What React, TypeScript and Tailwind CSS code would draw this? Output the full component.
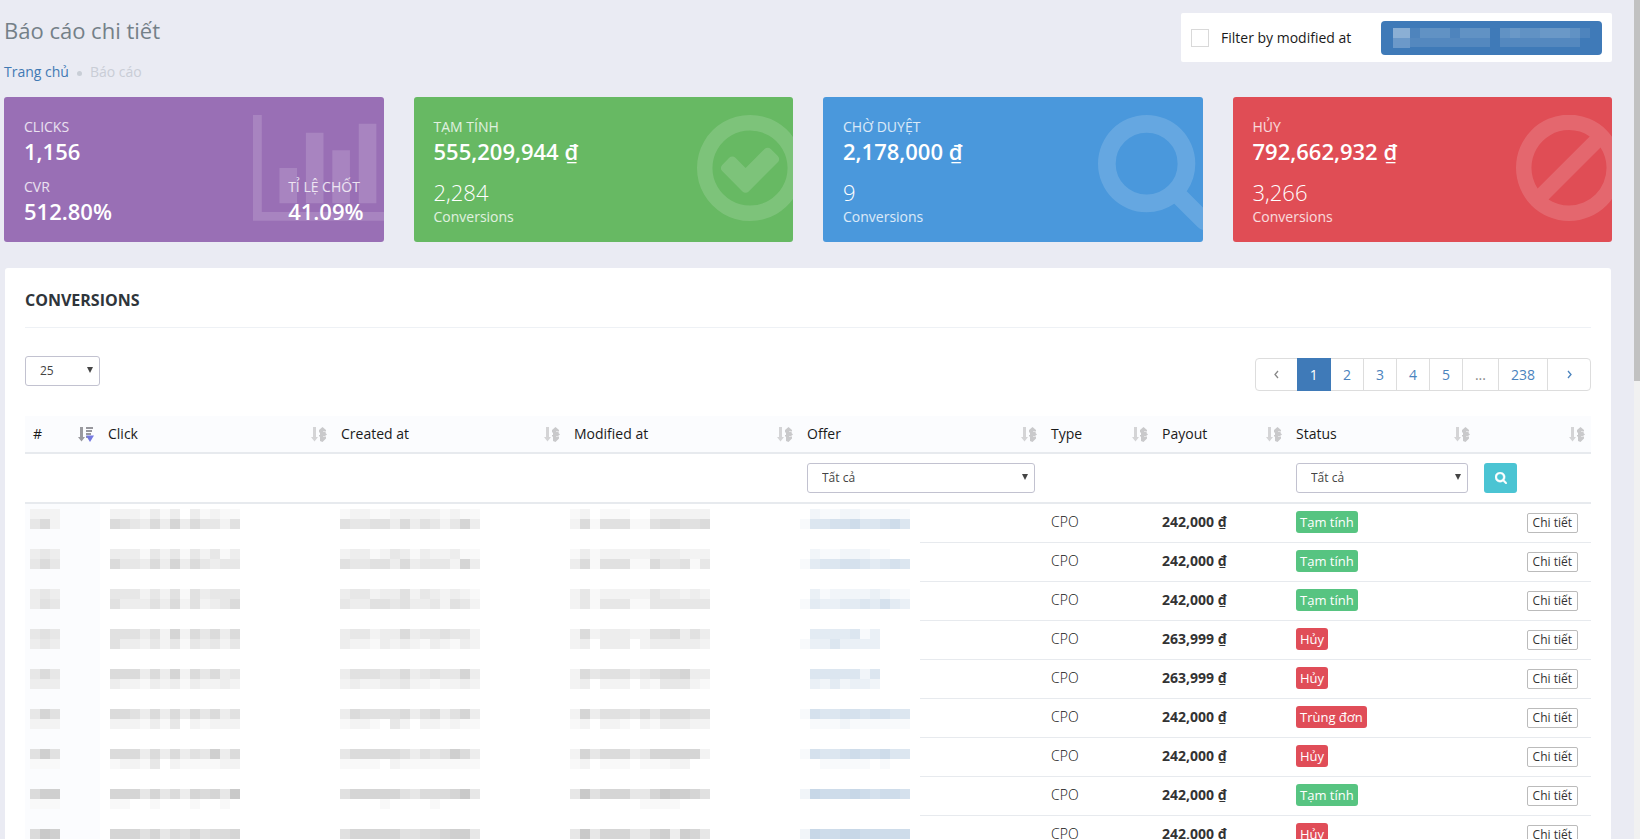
import { ReactNode } from "react";

type Status = "Tạm tính" | "Hủy" | "Trùng đơn";

interface Conversion {
  payout: string;
  status: Status;
  // masked cells, "top/bottom" line of shade levels
  id: string;
  click: string;
  created: string;
  modified: string;
  offer: string;
}

const conversions: Conversion[] = [
  { payout: "242,000", status: "Tạm tính", id: "222/462", click: "2221313031211/6543637364425", created: "12211222221211/54455363542473", modified: "12011100222222/26155511566556", offer: "02112211111/15566755675" },
  { payout: "242,000", status: "Tạm tính", id: "343/464", click: "3331424142413/6443637364344", created: "23312431322311/54455363444273", modified: "13122222333222/36155511644514", offer: "02112221100/14556654565" },
  { payout: "242,000", status: "Tạm tính", id: "343/354", click: "4442425153444/5333536252346", created: "34423352432321/43355453342542", modified: "24122222433232/24144411444444", offer: "03122223211/14334454643" },
  { payout: "263,999", status: "Hủy", id: "454/343", click: "5553527264636/5332424143424", created: "34423363445442/32213232132132", modified: "26233322556353/23033302333332", offer: "04444513/13353333" },
  { payout: "263,999", status: "Hủy", id: "464/333", click: "6663637264634/3221323132232", created: "35554463454473/23223342212232", modified: "26455534566733/23022202144421", offer: "05555525/03242332" },
  { payout: "242,000", status: "Trùng đơn", id: "475/222", click: "6653636364635/2221314021222", created: "36555563563573/12210420221211", modified: "27355546466655/12022102133322", offer: "16556656655/01112111111" },
  { payout: "242,000", status: "Hủy", id: "585/111", click: "6663636354836/1221402111122", created: "46666653545863/11110211111111", modified: "27466634777772/12011101112200", offer: "16556766755/00111110100" },
  { payout: "242,000", status: "Tạm tính", id: "688/111", click: "7774746376749/1100100010010", created: "57777754666794/00001000010000", modified: "49577744798875/00000001111000", offer: "28777876776/00000000000" },
  { payout: "242,000", status: "Hủy", id: "698/222", click: "7775746575667/2221212112222", created: "57777755667884/11121121122211", modified: "49477744783874/22122201122211", offer: "28778877777/01111111110" },
];

const ICONS = {
  chart: {
    viewBox: "0 128 2048 1536",
    className: "w-[141px]",
    d: "M640 896v512h-256v-512h256zm384-512v1024h-256v-1024h256zm1024 1152v128h-2048v-1536h128v1408h1920zm-640-896v768h-256v-768h256zm384-384v1152h-256v-1152h256z",
  },
  check: {
    viewBox: "128 128 1536 1536",
    className: "w-[106px]",
    d: "M1299 813l-422 422q-19 19-45 19t-45-19l-294-294q-19-19-19-45t19-45l102-102q19-19 45-19t45 19l147 147 275-275q19-19 45-19t45 19l102 102q19 19 19 45t-19 45zm141 83q0-148-73-273t-198-198-273-73-273 73-198 198-73 273 73 273 198 198 273 73 273-73 198-198 73-273zm224 0q0 209-103 385.5t-279.5 279.5-385.5 103-385.5-103-279.5-279.5-103-385.5 103-385.5 279.5-279.5 385.5-103 385.5 103 279.5 279.5 103 385.5z",
  },
  search: {
    viewBox: "64 128 1664 1664",
    className: "w-[115px]",
    d: "M1216 832q0-185-131.5-316.5t-316.5-131.5-316.5 131.5-131.5 316.5 131.5 316.5 316.5 131.5 316.5-131.5 131.5-316.5zm512 832q0 52-38 90t-90 38q-54 0-90-38l-343-342q-179 124-399 124-143 0-273.5-55.5t-225-150-150-225-55.5-273.5 55.5-273.5 150-225 225-150 273.5-55.5 273.5 55.5 225 150 150 225 55.5 273.5q0 220-124 399l343 343q37 37 37 90z",
  },
  ban: {
    viewBox: "128 128 1536 1536",
    className: "w-[106px]",
    d: "M1440 893q0-161-87-295l-754 753q137 89 297 89 111 0 211.5-43.5t173.5-116.5 116-174.5 43-212.5zm-999 299l755-754q-135-91-300-91-148 0-273 73t-198 199-73 274q0 162 89 299zm1223-299q0 157-61 300t-163.5 246-245 164-298.5 61-298.5-61-245-164-163.5-246-61-300 61-299.5 163.5-245.5 245-164 298.5-61 298.5 61 245 164 163.5 245.5 61 299.5z",
  },
};

function StatCard({ color, icon, children }: { color: string; icon: keyof typeof ICONS; children: ReactNode }) {
  const { viewBox, className, d } = ICONS[icon];
  return (
    <div className={`relative overflow-hidden rounded-[3px] px-5 pt-5 pb-[13px] text-white ${color}`}>
      <svg viewBox={viewBox} className={`absolute top-[18px] -right-[10px] fill-white/15 ${className}`}>
        <path d={d} />
      </svg>
      <div className="relative">{children}</div>
    </div>
  );
}

function Figure({ label, value }: { label: string; value: string }) {
  return (
    <div>
      <div className="text-sm leading-5 text-white/80">{label}</div>
      <div className="text-[22px] leading-7 font-semibold">{value}</div>
    </div>
  );
}

function ConversionCard({ color, icon, label, value, count }: { color: string; icon: keyof typeof ICONS; label: string; value: string; count: string }) {
  return (
    <StatCard color={color} icon={icon}>
      <Figure label={label} value={value} />
      <div className="mt-3 text-[22px] leading-[30px] font-light">{count}</div>
      <div className="text-sm leading-5 text-white/80">Conversions</div>
    </StatCard>
  );
}

// Masked cell text: two lines of 10px blocks, one shade level per digit
function Mask({ data, top, blue = false }: { data: string; top: number; blue?: boolean }) {
  const lines = data.split("/");
  const width = lines[0].length * 10;
  return (
    <svg width={width} height="38" className="block" aria-hidden="true">
      {lines.map((line, y) =>
        line.split("").map((ch, x) => {
          const n = Number(ch);
          const fill = blue
            ? `rgb(${255 - n * 7},${255 - n * 5},${255 - n * 3})`
            : `rgb(${255 - n * 6},${255 - n * 6},${255 - n * 6})`;
          return <rect key={`${x}-${y}`} x={x * 10} y={top + y * 10} width="10" height="10" fill={fill} />;
        })
      )}
    </svg>
  );
}

function SortIcon({ active = false }: { active?: boolean }) {
  return (
    <svg width="16" height="15" viewBox="0 0 16 15" className="shrink-0" aria-hidden="true">
      <path d="M2 0h3v10h2l-3.500 4.500L0 10h2z" fill={active ? "#9a9a9f" : "#d4d4d6"} />
      {active ? (
        <>
          <path d="M8 0h7v2H8zM8 3h6v2H8zM8 6h5v2H8zM8 9h3v2H8z" fill="#97979d" />
          <path d="M8 8.500h8L12 15z" fill="#7478e0" />
        </>
      ) : (
        <>
          <path d="M11.500 0l3.500 3v2.500h-1l2 2-2 1.500h1v2.500L11.500 15 9 14V9.500H8v-1.500h1V5.500H8V3z" fill="#c9c9cb" />
          <path d="M12 4h3v1h-3zM12 9h3v1h-3z" fill="#e4e4e6" />
        </>
      )}
    </svg>
  );
}

function Select({ label, options, className = "" }: { label: string; options: string[]; className?: string }) {
  return (
    <div className={`relative ${className}`}>
      <select aria-label={label} className="h-[30px] w-full appearance-none rounded-[3px] border border-[#c2c2d0] bg-white pl-[14px] text-xs text-[#444]">
        {options.map((o) => (
          <option key={o}>{o}</option>
        ))}
      </select>
      <svg width="6" height="6" viewBox="0 0 6 6" className="pointer-events-none absolute top-[11px] right-[7px]">
        <path d="M0 0h6L3 6z" fill="#444" />
      </svg>
    </div>
  );
}

function Chevron({ d }: { d: string }) {
  return (
    <svg width="5" height="9" viewBox="0 0 5 9" fill="none" stroke="currentColor" strokeWidth="1.300">
      <path d={d} />
    </svg>
  );
}

const columns = [
  { name: "#", width: "w-[75px]" },
  { name: "Click", width: "w-[233px]" },
  { name: "Created at", width: "w-[233px]" },
  { name: "Modified at", width: "w-[233px]" },
  { name: "Offer", width: "w-[244px]" },
  { name: "Type", width: "w-[111px]" },
  { name: "Payout", width: "w-[134px]" },
  { name: "Status", width: "w-[188px]" },
  { name: "", width: "w-[115px]" },
];

const pages = ["1", "2", "3", "4", "5", "...", "238"];

function Pagination() {
  return (
    <nav aria-label="Pages" className="mt-[2px] flex h-[33px] text-sm text-[#4b83bd]">
      <a href="#" aria-label="Previous" className="flex w-[43px] items-center justify-center rounded-l-[4px] border border-[#ddd] text-[#888]">
        <Chevron d="M4 1L1 4.500 4 8" />
      </a>
      {pages.map((p) => (
        <a
          key={p}
          href="#"
          className={`-ml-px flex items-center border px-3 ${
            p === "1" ? "z-10 border-[#3f7ab8] bg-[#3f7ab8] text-white" : p === "..." ? "border-[#ddd] text-[#888]" : "border-[#ddd]"
          }`}
        >
          {p}
        </a>
      ))}
      <a href="#" aria-label="Next" className="-ml-px flex w-11 items-center justify-center rounded-r-[4px] border border-[#ddd]">
        <Chevron d="M1 1l3 3.500L1 8" />
      </a>
    </nav>
  );
}

function ConversionTable() {
  return (
    <table className="mt-[25px] w-full table-fixed border-separate border-spacing-0 text-sm leading-5 text-[#333]">
      <thead>
        <tr className="h-[38px] bg-[#fbfcfe]">
          {columns.map((c, i) => (
            <th key={i} className={`border-b-2 border-[#e7eaee] pr-[6px] pl-2 text-left font-normal text-[#1a1a1a] ${c.width}`}>
              <div className="flex items-center justify-between">
                <span>{c.name}</span>
                <SortIcon active={i === 0} />
              </div>
            </th>
          ))}
        </tr>
        <tr className="h-[50px]">
          {columns.map((c, i) => (
            <td key={i} className="border-b-2 border-[#e7eaee] px-2">
              {c.name === "Offer" && <Select label="Offer" options={["Tất cả"]} />}
              {c.name === "Status" && <Select label="Status" options={["Tất cả"]} />}
              {c.name === "" && (
                <button aria-label="Search" className="flex h-[30px] w-[33px] items-center justify-center rounded-[3px] bg-[#4bc4d3]">
                  <svg viewBox="64 128 1664 1664" className="w-3 fill-white stroke-white stroke-[60]">
                    <path d={ICONS.search.d} />
                  </svg>
                </button>
              )}
            </td>
          ))}
        </tr>
      </thead>
      <tbody>
        {conversions.map((c, i) => (
          <tr key={i} className="h-[39px] align-top">
            <td className="bg-[#fbfcfe] p-0 pl-[5px]">
              <Mask data={c.id} top={5 + i} />
            </td>
            <td className="p-0 pl-[10px]">
              <Mask data={c.click} top={5 + i} />
            </td>
            <td className="p-0 pl-[7px]">
              <Mask data={c.created} top={5 + i} />
            </td>
            <td className="p-0 pl-1">
              <Mask data={c.modified} top={5 + i} />
            </td>
            <td className="p-0">
              <div className="flex h-[39px] pl-px">
                <div className="w-[120px]">
                  <Mask data={c.offer} top={5 + i} blue />
                </div>
                <div className="flex-1 border-b border-[#e7eaee]" />
              </div>
            </td>
            <td className="border-b border-[#e7eaee] px-2 pt-2 font-light text-[#111]">CPO</td>
            <td className="border-b border-[#e7eaee] px-2 pt-2 font-bold">{c.payout} ₫</td>
            <td className="border-b border-[#e7eaee] px-2 pt-[7px]">
              <span
                className={`block w-fit rounded-[3px] px-1 text-[13px] leading-[22px] text-white ${
                  c.status === "Tạm tính" ? "bg-[#57c481]" : "bg-[#e04d58]"
                }`}
              >
                {c.status}
              </span>
            </td>
            <td className="border-b border-[#e7eaee] pt-[9px] pr-[13px]">
              <button className="ml-auto block rounded-[2px] border border-[#bbb] bg-white px-[5px] text-xs leading-[18px]">Chi tiết</button>
            </td>
          </tr>
        ))}
      </tbody>
    </table>
  );
}

export default function App() {
  return (
    <div className="flex h-screen overflow-hidden bg-[#eaebf3] font-['Open_Sans',sans-serif]">
      <main className="min-w-0 flex-1 pr-[22px] pl-1">
        {/* Header */}
        <header className="flex items-start justify-between">
          <div>
            <h1 className="mt-[14px] text-[22px] leading-8 text-[#748088]">Báo cáo chi tiết</h1>
            <nav className="mt-4 flex items-center text-sm leading-5">
              <a href="#" className="text-[#4179b3]">Trang chủ</a>
              <span className="mx-2 mt-[3px] h-[5px] w-[5px] rounded-full bg-[#c9ced6]" />
              <span className="text-[#c9cdd6]">Báo cáo</span>
            </nav>
          </div>
          <div className="mt-[13px] flex h-[49px] items-center rounded-[2px] bg-white px-[10px]">
            <input id="by-modified" type="checkbox" className="h-[18px] w-[18px] appearance-none border border-[#d9d9d9] bg-white" />
            <label htmlFor="by-modified" className="ml-3 w-[136px] text-sm text-[#1a1a1a]">Filter by modified at</label>
            <button aria-label="Date range" className="ml-6 flex h-[34px] w-[221px] items-center justify-center rounded-[4px] bg-[#3f7ab8]">
              <svg width="197" height="20" aria-hidden="true" fill="#fff">
                <path d="M0 0h17v10H0z" opacity=".4" />
                <path d="M0 10h17v10H0z" opacity=".24" />
                <path d="M27 0h30v10H27zM67 0h30v10H67zM107 0h80v10h-80z" opacity=".18" />
                <path d="M17 0h10v10H17zM57 0h10v10H57zM187 0h10v10h-10z" opacity=".08" />
                <path d="M17 10h80v9H17zM107 10h80v9h-80z" opacity=".11" />
                <path d="M117 0h10v10h-10zM147 0h30v10h-30z" opacity=".06" />
              </svg>
            </button>
          </div>
        </header>

        {/* Stats */}
        <section className="mt-[15px] grid grid-cols-4 gap-[30px]">
          <StatCard color="bg-[#996fb5]" icon="chart">
            <Figure label="CLICKS" value="1,156" />
            <div className="mt-3 flex justify-between pb-1">
              <Figure label="CVR" value="512.80%" />
              <Figure label="TỈ LỆ CHỐT" value="41.09%" />
            </div>
          </StatCard>
          <ConversionCard color="bg-[#67b963]" icon="check" label="TẠM TÍNH" value="555,209,944 ₫" count="2,284" />
          <ConversionCard color="bg-[#4a98dc]" icon="search" label="CHỜ DUYỆT" value="2,178,000 ₫" count="9" />
          <ConversionCard color="bg-[#e04d55]" icon="ban" label="HỦY" value="792,662,932 ₫" count="3,266" />
        </section>

        {/* Conversions */}
        <section className="mx-px mt-[26px] rounded-t-[3px] bg-white px-5 pt-5">
          <h2 className="border-b border-[#eef1f5] pb-[15px] text-base leading-6 font-bold text-[#2f353b]">CONVERSIONS</h2>
          <div className="mt-[28px] flex items-start justify-between">
            <Select label="Rows per page" options={["25", "50", "100"]} className="w-[75px]" />
            <Pagination />
          </div>
          <ConversionTable />
        </section>
      </main>

      {/* Scrollbar */}
      <div className="w-[6px] bg-[#f1f1f1]">
        <div className="h-[381px] bg-[#c1c1c1]" />
      </div>
    </div>
  );
}
